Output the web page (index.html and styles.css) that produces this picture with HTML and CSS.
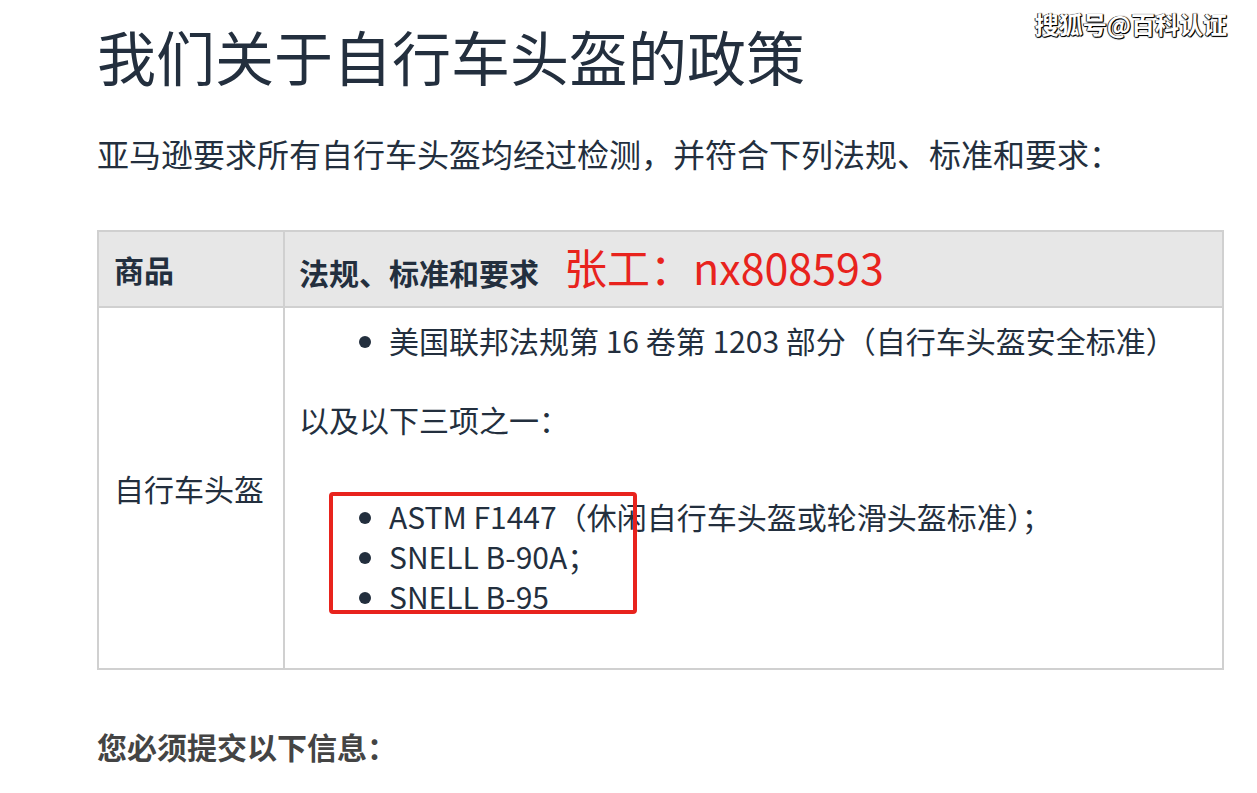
FILE: index.html
```html
<!DOCTYPE html>
<html>
<head lang="zh">
    <meta charset="UTF-8">
    <title>我们关于自行车头盔的政策</title>
    <link rel="stylesheet" href="styles.css">
</head>
<body>
<div class="mark">搜狐号@百科认证</div>
<div class="page">
    <h1 class="title">我们关于自行车头盔的政策</h1>
    <p class="lead">亚马逊要求所有自行车头盔均经过检测，并符合下列法规、标准和要求：</p>

    <table class="rules">
        <tr>
            <th class="c1">商品</th>
            <th>法规、标准和要求<span class="note">张工：nx808593</span></th>
        </tr>
        <tr>
            <td class="c1">自行车头盔</td>
            <td class="req">
                <ul class="list">
                    <li>美国联邦法规第 16 卷第 1203 部分（自行车头盔安全标准）</li>
                </ul>
                <p class="or">以及以下三项之一：</p>
                <div class="boxed">
                    <ul class="list">
                        <li>ASTM F1447（休闲自行车头盔或轮滑头盔标准）；</li>
                        <li>SNELL B-90A；</li>
                        <li>SNELL B-95</li>
                    </ul>
                    <span class="frame"></span>
                </div>
            </td>
        </tr>
    </table>

    <h3 class="must">您必须提交以下信息：</h3>
</div>
</body>
</html>
```

FILE: styles.css
```css
*{
    margin: 0;
    padding: 0;
}
body{
    font-family: "Noto Sans CJK SC", "Noto Sans", sans-serif;
    color: #232f3e;
    background: #fff;
}
.page{
    padding-left: 97px;
    width: 1127px;
}
.title{
    font-size: 59px;
    font-weight: normal;
    line-height: 72px;
    margin-top: 20px;
}
.lead{
    font-size: 32px;
    line-height: 44px;
    margin-top: 39px;
}
.rules{
    border-collapse: collapse;
    width: 1127px;
    margin-top: 55px;
    font-size: 30px;
    line-height: 40px;
}
.rules th,
.rules td{
    border: 2px solid #d0d0d0;
    text-align: left;
    vertical-align: middle;
}
.rules th{
    background: #e7e7e7;
    padding: 14px 16px 14px 14px;
    font-weight: bold;
    height: 40px;
}
.rules .c1{
    width: 153px;
    padding-left: 15px;
}
.rules td.c1{
    font-weight: normal;
    padding-right: 16px;
}
.note{
    color: #e8231d;
    font-weight: normal;
    font-size: 43px;
    line-height: 40px;
    margin-left: 25px;
}
.req{
    padding: 12px 14px 52px;
}
.list{
    padding-left: 90px;
    list-style: disc;
}
.or{
    margin: 39px 0 57px;
}
.boxed{
    position: relative;
}
.frame{
    position: absolute;
    left: 30px;
    top: -4px;
    width: 300px;
    height: 114px;
    border: 4px solid #e8231d;
    border-radius: 4px;
}
.must{
    font-size: 30px;
    line-height: 40px;
    color: #444;
    margin-top: 56px;
}
.mark{
    position: absolute;
    top: 6px;
    right: 30px;
    font-size: 24px;
    line-height: 36px;
    font-weight: bold;
    color: #fff;
    text-shadow: 1px 1px 0 #000, -1px 0 0 #333, 0 1px 1px #000, 1px 0 1px #000;
}
```
